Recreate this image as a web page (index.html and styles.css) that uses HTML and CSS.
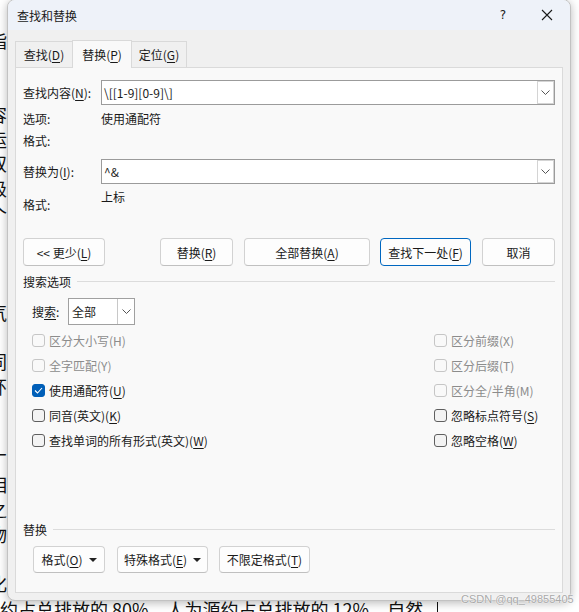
FILE: index.html
```html
<!DOCTYPE html>
<html lang="zh">
<head>
<meta charset="utf-8">
<title>查找和替换</title>
<link rel="stylesheet" href="styles.css">
</head>
<body>
<div class="screen">
  <div class="doc">
    <div class="line">指</div>
    <div class="line">]</div>
    <div class="line">]</div>
    <div class="line">容</div>
    <div class="line">运</div>
    <div class="line">双</div>
    <div class="line">级</div>
    <div class="line">个</div>
    <div class="line">&nbsp;</div>
    <div class="line">&nbsp;</div>
    <div class="line">&nbsp;</div>
    <div class="line">气</div>
    <div class="line">*</div>
    <div class="line">同</div>
    <div class="line">环</div>
    <div class="line">&nbsp;</div>
    <div class="line">&nbsp;</div>
    <div class="line">丁</div>
    <div class="line">相</div>
    <div class="line">之</div>
    <div class="line">物</div>
    <div class="line">-</div>
    <div class="line">化</div>
    <div class="line last">约占总排放的 80%，人为源约占总排放的 12%，自然<span class="caret"></span></div>
  </div>

  <div class="dialog">
    <div class="titlebar">
      <div class="title">查找和替换</div>
      <div class="controls">
        <div class="ctrl help">?</div>
        <div class="ctrl close">
          <svg width="12" height="12" viewBox="0 0 12 12"><path d="M1 1 L11 11 M11 1 L1 11" stroke="#1a1a1a" stroke-width="1.1" fill="none"/></svg>
        </div>
      </div>
    </div>

    <div class="body">
      <div class="tabs">
        <div class="tab t1">查找(<u>D</u>)</div>
        <div class="tab t2 active">替换(<u>P</u>)</div>
        <div class="tab t3">定位(<u>G</u>)</div>
      </div>

      <div class="panel">
        <div class="field-row">
          <div class="label">查找内容(<u>N</u>):</div>
          <div class="combo">
            <div class="combo-text">\[[1-9][0-9]\]</div>
            <div class="combo-btn"><svg width="9" height="5" viewBox="0 0 9 5"><path d="M0.5 0.5 L4.5 4.5 L8.5 0.5" stroke="#555" stroke-width="1" fill="none"/></svg></div>
          </div>
        </div>
        <div class="info-row r1"><div class="label">选项:</div><div class="value">使用通配符</div></div>
        <div class="info-row r2"><div class="label">格式:</div><div class="value"></div></div>

        <div class="field-row r3">
          <div class="label">替换为(<u>I</u>):</div>
          <div class="combo">
            <div class="combo-text">^&amp;</div>
            <div class="combo-btn"><svg width="9" height="5" viewBox="0 0 9 5"><path d="M0.5 0.5 L4.5 4.5 L8.5 0.5" stroke="#555" stroke-width="1" fill="none"/></svg></div>
          </div>
        </div>
        <div class="info-row fmt2"><div class="label bottom">格式:</div><div class="value top">上标</div></div>

        <div class="btn-row">
          <div class="btn b-less">&lt;&lt; 更少(<u>L</u>)</div>
          <div class="btn b-rep">替换(<u>R</u>)</div>
          <div class="btn b-all">全部替换(<u>A</u>)</div>
          <div class="btn b-next focus">查找下一处(<u>F</u>)</div>
          <div class="btn b-cancel">取消</div>
        </div>

        <div class="group-head h1"><span>搜索选项</span><div class="rule"></div></div>

        <div class="search-row">
          <div class="search-label">搜<u>索</u>:</div>
          <div class="select">
            <div class="select-text">全部</div>
            <div class="select-btn"><svg width="9" height="5" viewBox="0 0 9 5"><path d="M0.5 0.5 L4.5 4.5 L8.5 0.5" stroke="#555" stroke-width="1" fill="none"/></svg></div>
          </div>
        </div>

        <div class="checks">
          <div class="chk disabled"><span class="box"></span>区分大小写(H)</div>
          <div class="chk disabled"><span class="box"></span>区分前缀(X)</div>
          <div class="chk disabled"><span class="box"></span>全字匹配(Y)</div>
          <div class="chk disabled"><span class="box"></span>区分后缀(T)</div>
          <div class="chk"><span class="box checked"><svg width="9" height="7" viewBox="0 0 9 7"><path d="M1 3.5 L3.5 6 L8 1" stroke="#fff" stroke-width="1.1" fill="none"/></svg></span>使用通配符(<u>U</u>)</div>
          <div class="chk disabled"><span class="box"></span>区分全/半角(M)</div>
          <div class="chk"><span class="box"></span>同音(英文)(<u>K</u>)</div>
          <div class="chk"><span class="box"></span>忽略标点符号(<u>S</u>)</div>
          <div class="chk"><span class="box"></span>查找单词的所有形式(英文)(<u>W</u>)</div>
          <div class="chk"><span class="box"></span>忽略空格(<u>W</u>)</div>
        </div>

        <div class="group-head h2"><span>替换</span><div class="rule"></div></div>

        <div class="bottom-row">
          <div class="btn bb1">格式(<u>O</u>)<span class="tri"></span></div>
          <div class="btn bb2">特殊格式(<u>E</u>)<span class="tri"></span></div>
          <div class="btn bb3">不限定格式(<u>T</u>)</div>
        </div>
      </div>
    </div>
  </div>

  <div class="watermark">CSDN @qq_49855405</div>
</div>
</body>
</html>
```

FILE: styles.css
```css
* { box-sizing: border-box; }

html, body {
  margin: 0;
  padding: 0;
  background: #ffffff;
}

.screen {
  position: relative;
  width: 579px;
  height: 612px;
  overflow: hidden;
  background: #ffffff;
  font-family: "Noto Sans CJK SC", "Noto Sans", sans-serif;
}

/* background document */
.doc {
  padding-top: 28px;
  margin-left: -11px;
  font-family: "Noto Sans CJK SC", sans-serif;
  font-size: 18px;
  line-height: 24.7px;
  color: #111;
  white-space: nowrap;
}

.doc .line { height: 24.7px; }

.doc .last {
  margin-left: 11px;
  margin-top: 1px;
}

.caret {
  display: inline-block;
  width: 1px;
  height: 18px;
  background: #111;
  margin-left: 14px;
  vertical-align: -3px;
}

/* dialog window */
.dialog {
  position: absolute;
  left: 7px;
  top: -1px;
  width: 564px;
  height: 602px;
  border: 1px solid #c2c2c2;
  border-radius: 8px;
  background: #f0f0f0;
  box-shadow: 0 2px 10px rgba(0, 0, 0, 0.28);
  overflow: hidden;
  display: flex;
  flex-direction: column;
  color: #1a1a1a;
  font-size: 12px;
}

.titlebar {
  height: 30px;
  flex: none;
  background: #eef2f9;
  display: flex;
  align-items: center;
  justify-content: space-between;
}

.title {
  padding-left: 9px;
  font-size: 12px;
  padding-top: 1px;
}

.controls {
  display: flex;
  height: 100%;
}

.ctrl {
  display: flex;
  align-items: center;
  justify-content: center;
  height: 100%;
}

.help {
  width: 42px;
  font-family: "DejaVu Sans", sans-serif;
  font-size: 12px;
  color: #1a1a1a;
}

.close { width: 46px; }

.body {
  flex: 1;
  padding: 10px 7px 0 7px;
}

.tabs {
  display: flex;
  align-items: flex-end;
  height: 27px;
}

.tab {
  height: 26px;
  border: 1px solid #d9d9d9;
  border-bottom: none;
  background: #f0f0f0;
  display: flex;
  align-items: center;
  justify-content: center;
  font-size: 12px;
  color: #1a1a1a;
}

.tab + .tab { margin-left: -1px; }

.t1 { width: 58px; }
.t2 { width: 60px; }
.t3 { width: 56px; }

.tab.active {
  height: 28px;
  background: #f9f9f9;
  position: relative;
  z-index: 2;
  margin-bottom: -1px;
}

.panel {
  height: 526px;
  border: 1px solid #dadada;
  background: #f9f9f9;
  padding: 12px 7px 0 7px;
}

u {
  text-decoration: underline;
  text-underline-offset: 2px;
  text-decoration-thickness: 1px;
}

.field-row {
  display: grid;
  grid-template-columns: 78px 1fr;
  align-items: center;
  height: 25px;
}

.field-row.r3 { margin-top: 10px; }

.combo {
  height: 25px;
  border: 1px solid #9b9b9b;
  background: #ffffff;
  display: flex;
  align-items: center;
  justify-content: space-between;
}

.combo-text {
  padding-left: 2px;
  font-size: 12px;
}

.combo-btn {
  width: 17px;
  height: 23px;
  border: 1px solid #d4d4d4;
  display: flex;
  align-items: center;
  justify-content: center;
  background: #ffffff;
}

.info-row {
  display: grid;
  grid-template-columns: 78px 1fr;
  height: 18px;
  align-items: center;
  margin-top: 4px;
}

.info-row.fmt2 {
  height: 24px;
  margin-top: 5px;
  align-items: stretch;
}

.label.bottom { align-self: end; line-height: 16px; }
.value.top { align-self: start; line-height: 16px; }

.btn-row {
  display: flex;
  margin-top: 25px;
  height: 28px;
}

.btn {
  height: 100%;
  border: 1px solid #d2d2d2;
  border-bottom-color: #c0c0c0;
  border-radius: 4px;
  background: #fdfdfd;
  display: flex;
  align-items: center;
  justify-content: center;
  font-size: 12px;
  color: #1a1a1a;
}

.btn.focus {
  border: 1px solid #0067c0;
}

.b-less { width: 82px; margin-right: 55px; }
.b-rep { width: 73px; margin-right: 11px; }
.b-all { width: 126px; margin-right: 10px; }
.b-next { width: 91px; margin-right: 11px; }
.b-cancel { width: 73px; }

.group-head {
  display: flex;
  align-items: center;
  height: 16px;
}

.group-head .rule {
  flex: 1;
  height: 1px;
  background: #dcdcdc;
  margin-left: 6px;
}

.h1 { margin-top: 7px; }
.h2 { margin-top: 68px; }

.search-row {
  display: flex;
  align-items: center;
  margin-top: 9px;
  padding-left: 9px;
  height: 27px;
}

.search-label { width: 36px; }

.select {
  width: 67px;
  height: 27px;
  border: 1px solid #a0a0a0;
  background: #ffffff;
  display: flex;
  align-items: center;
  justify-content: space-between;
}

.select-text { padding-left: 3px; }

.select-btn {
  width: 17px;
  height: 100%;
  border-left: 1px solid #c8c8c8;
  display: flex;
  align-items: center;
  justify-content: center;
}

.checks {
  display: grid;
  grid-template-columns: 402px 1fr;
  grid-auto-rows: 25px;
  padding-left: 9px;
  margin-top: 3px;
}

.chk {
  display: flex;
  align-items: center;
  font-size: 12px;
  color: #1a1a1a;
}

.chk.disabled { color: #8c8c8c; }

.box {
  width: 13px;
  height: 13px;
  border: 1px solid #5f5f5f;
  border-radius: 3px;
  background: #f3f3f3;
  margin-right: 4px;
  display: flex;
  align-items: center;
  justify-content: center;
  flex: none;
}

.chk.disabled .box {
  border-color: #c6c6c6;
  background: #f9f9f9;
}

.box.checked {
  background: #005fb8;
  border-color: #005fb8;
}

.bottom-row {
  display: flex;
  margin-top: 9px;
  padding-left: 10px;
  height: 27px;
}

.bb1 { width: 72px; margin-right: 12px; }
.bb2 { width: 91px; margin-right: 11px; }
.bb3 { width: 91px; }

.tri {
  display: inline-block;
  width: 0;
  height: 0;
  border-left: 4px solid transparent;
  border-right: 4px solid transparent;
  border-top: 4px solid #222;
  margin-left: 6px;
}

.watermark {
  position: absolute;
  left: 461px;
  top: 593px;
  font-family: "Liberation Sans", Arial, sans-serif;
  font-size: 11px;
  color: #a8a8a8;
  text-shadow: 0 0 2px #ffffff, 0 0 1px #ffffff;
  white-space: nowrap;
}
```
